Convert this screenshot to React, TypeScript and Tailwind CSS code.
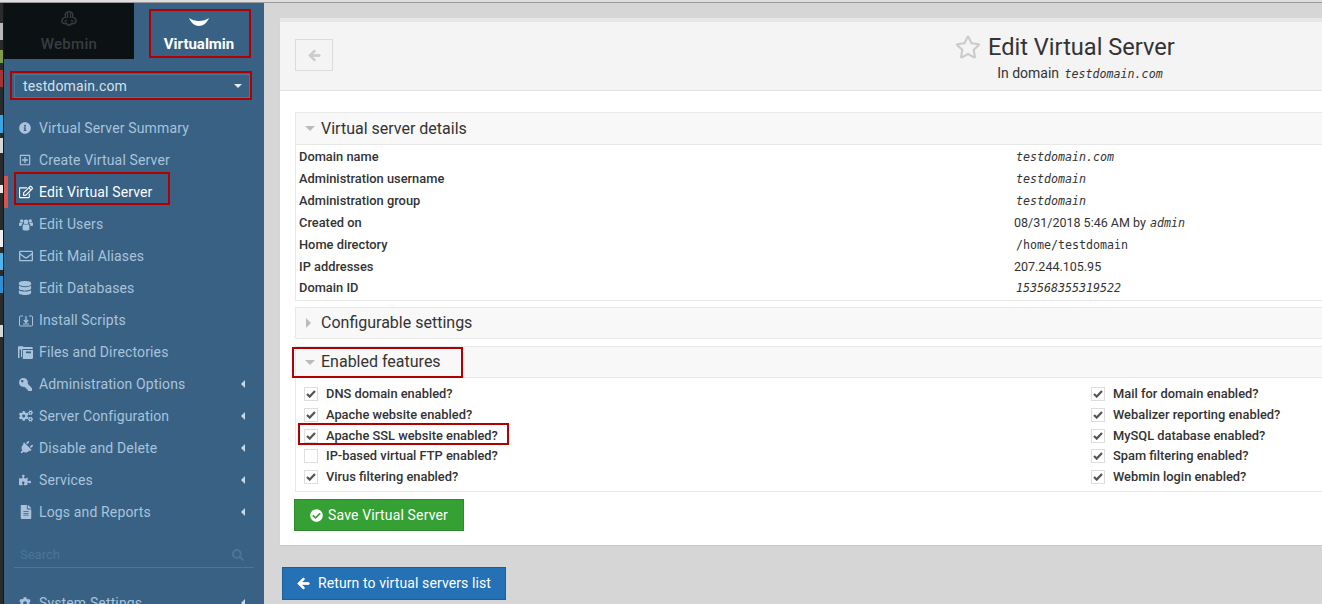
import React from "react";
import { FaInfoCircle, FaRegPlusSquare, FaRegEdit, FaRegEnvelope, FaDatabase, FaKey, FaCogs, FaPlug, FaPuzzlePiece, FaFileAlt, FaSearch, FaCog, FaArrowLeft, FaCheckCircle, FaRegStar } from "react-icons/fa";

const roboto = "font-['Roboto',sans-serif]";
const mono = "font-['DejaVu_Sans_Mono',monospace] text-[11.65px]";

function InstallIcon() {
  return (
    <svg width="14" height="13" viewBox="0 0 14 13" fill="none" stroke="currentColor">
      <path d="M4 2H1.500a1 1 0 0 0-1 1v8a1 1 0 0 0 1 1h11a1 1 0 0 0 1-1V3a1 1 0 0 0-1-1H10" strokeWidth="1" />
      <path d="M7 2v6M4.800 6L7 8.500 9.200 6M4 10h6" strokeWidth="1.200" />
    </svg>
  );
}

function UsersIcon() {
  return (
    <svg width="14" height="13" viewBox="0 0 14 13" fill="currentColor">
      <circle cx="7" cy="4" r="2.400" />
      <circle cx="2.700" cy="3" r="1.700" />
      <circle cx="11.300" cy="3" r="1.700" />
      <path d="M3.600 8c0-1.300 1-1.800 1.700-1.800.5.400 1 .6 1.700.6s1.200-.2 1.700-.6c.7 0 1.700.5 1.700 1.800v3.100c0 1-.7 1.400-1.400 1.400H5c-.7 0-1.400-.4-1.400-1.400z" />
      <path d="M0 5.500c0-.6.600-.9 1-.9.500.4 1 .5 1.700.5.400 0 .7 0 1-.2-.2.500 0 1-.2 1.200-.7.300-1.100 1-1.200 2H1c-.6 0-1-.4-1-1zM14 5.500c0-.6-.6-.9-1-.9-.5.400-1 .5-1.700.5-.4 0-.7 0-1-.2.200.500 0 1 .2 1.200.7.300 1.100 1 1.200 2H13c.6 0 1-.4 1-1z" />
    </svg>
  );
}

function FilesIcon() {
  return (
    <svg width="15" height="13" viewBox="0 0 15 13" fill="currentColor">
      <path d="M0 1.500C0 .8.500.3 1.200.3h3.300c.5 0 .9.300 1.100.7h8c.7 0 1.200.5 1.200 1.200V3H5.500C4.700 3 4 3.600 4 4.400V11H3V3.500H1.500V12H0z" />
      <path d="M4.800 4h10.200v7.800c0 .7-.5 1.200-1.200 1.200H4.800zM8 5.500v1.800h5V5.500z" />
    </svg>
  );
}

function WebminLogo() {
  return (
    <svg width="18" height="17" viewBox="0 0 18 18" fill="none" stroke="#383d40" strokeWidth="1.600">
      <path d="M6 2c2-1.500 4-1.500 6 0 1 1 1 3 .5 4.500 2 .5 4 2 4 4 0 2.500-2.500 3.500-4.500 2.500-1 1.500-2 2-3 2s-2-.5-3-2c-2 1-4.500 0-4.500-2.500 0-2 2-3.500 4-4C5 5 5 3 6 2z" />
      <path d="M7.500 2.500v5M10.500 2.500v5M7 9.500l-3 2M11 9.500l3 2" strokeWidth="1.200" />
    </svg>
  );
}

const items: [string, React.ReactNode, boolean?, boolean?][] = [
  ["Virtual Server Summary", <FaInfoCircle size={12} />],
  ["Create Virtual Server", <FaRegPlusSquare size={12} />],
  ["Edit Virtual Server", <FaRegEdit size={14} />, false, true],
  ["Edit Users", <UsersIcon />],
  ["Edit Mail Aliases", <FaRegEnvelope size={14} />],
  ["Edit Databases", <FaDatabase size={14} className="-ml-[1px]" />],
  ["Install Scripts", <InstallIcon />],
  ["Files and Directories", <span className="-ml-[1px]"><FilesIcon /></span>],
  ["Administration Options", <FaKey size={13} className="-scale-x-100" />, true],
  ["Server Configuration", <FaCogs size={14} />, true],
  ["Disable and Delete", <FaPlug size={14} className="rotate-45" />, true],
  ["Services", <FaPuzzlePiece size={12} />, true],
  ["Logs and Reports", <FaFileAlt size={14} />, true],
];

function SideItem({ label, icon, arrow, active }: { label: string; icon: React.ReactNode; arrow?: boolean; active?: boolean }) {
  return (
    <div className={`flex h-8 items-center pl-[15px] pr-[19px] text-[14px] tracking-[0.14px] ${active ? "text-white" : "text-[#a9c3dc]"}`}>
      <span className="flex w-5 shrink-0 justify-start">{icon}</span>
      <span className="flex-1 leading-none">{label}</span>
      {arrow && <span className="h-0 w-0 border-y-[4px] border-r-[4px] border-y-transparent border-r-[#c8d8e8]" />}
    </div>
  );
}

function Sidebar() {
  return (
    <aside className={`relative flex h-[604px] w-[260px] shrink-0 flex-col overflow-hidden bg-[#386183] pt-[3px] ${roboto}`}>
      <div className="flex h-[56px] shrink-0">
        <div className="flex w-[130px] flex-col items-center bg-[#0c1113] pt-[8px] text-[#383d40]">
          <WebminLogo />
          <span className="mt-[9px] text-[15px] font-medium leading-none tracking-[0.3px]">Webmin</span>
        </div>
        <div className="relative flex w-[130px] flex-col items-center pt-[14px] text-white">
          <svg width="20" height="10" viewBox="0 0 20 10" fill="#fff"><path d="M0 1c3 2 6 3 10 3s7-1 10-3c-2 5-6 8-10 8S2 6 0 1z" /></svg>
          <span className="mt-[10px] text-[15px] font-bold leading-none">Virtualmin</span>
          <div className="absolute left-[15px] top-[6px] h-[49px] w-[102px] border-2 border-[#b00000]" />
        </div>
      </div>
      <div className="relative mx-[10px] mt-[15px] flex h-[24px] w-[236px] shrink-0 items-center justify-between border border-[#4a7698] pl-[8px] pr-[7px] text-[14px] tracking-[0.14px] text-[#d5e1ec]">
        <span>testdomain.com</span>
        <span className="h-0 w-0 border-x-[4px] border-t-[4px] border-x-transparent border-t-[#e4ebf2]" />
        <div className="absolute -bottom-[3px] -left-[5px] -right-[3px] -top-[4px] border-2 border-[#b00000]" />
      </div>
      <nav className="mt-[14px] flex flex-col">
        {items.map(([label, icon, arrow, active]) => (
          <div key={label} className="relative">
            <SideItem label={label} icon={icon} arrow={arrow} active={active} />
            {active && (
              <>
                <div className="absolute bottom-0 left-0 top-0 w-[4px] bg-[#d9534f]" />
                <div className="absolute -top-[4px] left-[10px] h-[33px] w-[156px] border-2 border-[#b00000]" />
              </>
            )}
          </div>
        ))}
      </nav>
      <div className="mx-[10px] mt-[15px] flex h-[25px] w-[240px] shrink-0 items-center justify-between border-b border-[#4a7698] pl-[6px] pr-[10px] text-[13px] text-[#4c7596]">
        <span>Search</span>
        <FaSearch size={12} />
      </div>
      <div className="mt-[19px]">
        <SideItem label="System Settings" icon={<FaCog size={12} />} arrow />
      </div>
    </aside>
  );
}

function Section({ title, open, boxed, height }: { title: string; open: boolean; boxed?: boolean; height: string }) {
  return (
    <div className={`relative flex items-center border border-r-0 border-[#e8e8e8] bg-[#f8f8f8] pl-[9px] text-[16px] text-[#333] ${height}`}>
      <span className="flex w-[16px] items-center">
        {open ? (
          <span className="h-0 w-0 border-x-[5px] border-t-[5px] border-x-transparent border-t-[#bbb]" />
        ) : (
          <span className="ml-[1px] h-0 w-0 border-y-[5px] border-l-[5px] border-y-transparent border-l-[#bbb]" />
        )}
      </span>
      <span>{title}</span>
      {boxed && <div className="absolute -left-[4px] top-0 h-[31px] w-[171px] border-2 border-[#b00000]" />}
    </div>
  );
}

const details: [string, React.ReactNode, string][] = [
  ["Domain name", <i className={`ml-[2px] ${mono}`}>testdomain.com</i>, "h-[22px]"],
  ["Administration username", <i className={`ml-[2px] ${mono}`}>testdomain</i>, "h-[22px]"],
  ["Administration group", <i className={`ml-[2px] ${mono}`}>testdomain</i>, "h-[22px]"],
  ["Created on", <span>08/31/2018 5:46 AM by <i className={`ml-[1px] ${mono}`}>admin</i></span>, "h-[22px]"],
  ["Home directory", <span className={`ml-[2px] ${mono}`}>/home/testdomain</span>, "h-[22px]"],
  ["IP addresses", <span>207.244.105.95</span>, "h-[22px]"],
  ["Domain ID", <i className={`ml-[2px] ${mono}`}>153568355319522</i>, "h-[20px]"],
];

function Feature({ label, checked = true, boxed, tight }: { label: string; checked?: boolean; boxed?: boolean; tight?: boolean }) {
  return (
    <div className={`relative flex h-[21px] items-center text-[12.85px] font-medium text-[#333] ${tight ? "-mb-[1px]" : ""}`}>
      <span className="mr-[8px] flex h-[14px] w-[14px] items-center justify-center border border-[#ddd] bg-white">
        {checked && (
          <svg width="10" height="8" viewBox="0 0 10 8" fill="none" stroke="#555" strokeWidth="2.200">
            <path d="M1 4l2.700 2.600L9 1" />
          </svg>
        )}
      </span>
      <span>{label}</span>
      {boxed && <div className="absolute -left-[6px] -top-[2px] h-[22px] w-[211px] border-2 border-[#b00000]" />}
    </div>
  );
}

const strip: [string, string][] = [
  ["h-[23px]", "bg-[#2b2b2b]"],
  ["h-[17px]", "bg-[#b8b8b8]"],
  ["h-[10px]", "bg-[#2b2b2b]"],
  ["h-[13px]", "bg-[#7f9c44]"],
  ["h-[7px]", "bg-[#2b2b2b]"],
  ["h-[17px]", "bg-[#a83232]"],
  ["h-[28px]", "bg-[#2b2b2b]"],
  ["h-[18px]", "bg-[#3aa6e0]"],
  ["h-[5px]", "bg-[#2b2b2b]"],
  ["h-[15px]", "bg-[#d8d8d8]"],
  ["h-[32px]", "bg-[#2b2b2b]"],
  ["h-[8px]", "bg-[#e8e8e8]"],
  ["h-[37px]", "bg-[#2b2b2b]"],
  ["h-[17px]", "bg-[#f0f0f0]"],
  ["h-[6px]", "bg-[#2b2b2b]"],
  ["h-[17px]", "bg-[#4ab8ea]"],
  ["h-[6px]", "bg-[#2b2b2b]"],
  ["h-[17px]", "bg-[#2f8fd0]"],
  ["h-[32px]", "bg-[#2b2b2b]"],
  ["h-[12px]", "bg-[#d8d8d8]"],
];

export default function App() {
  return (
    <div className={`relative flex h-[604px] w-[1322px] overflow-hidden bg-[#d6d6d6] ${roboto}`}>
      <div className="flex w-[4px] shrink-0 flex-col border-r border-[#151515] bg-[#2b2b2b]">
        {strip.map(([h, c], i) => (
          <div key={i} className={`${h} ${c} shrink-0`} />
        ))}
      </div>
      <Sidebar />
      <main className="relative min-w-0 flex-1 pl-[16px] pt-[18px]">
        <div className="border-t-[4px] border-[#e6e6e6] bg-white pb-[14px] shadow-[0_1px_1px_rgba(0,0,0,0.05)]">
          <div className="flex h-[69px] border-b border-[#e2e2e2] bg-[#f4f4f4]">
            <div className="ml-[15px] mt-[17px] flex h-[32px] w-[38px] items-center justify-center border border-[#dcdcdc] text-[#ccc]">
              <FaArrowLeft size={13} className="stroke-current stroke-[30]" />
            </div>
            <div className="ml-[622px] flex flex-col items-center pt-[9px]">
              <div className="flex items-center text-[23.6px] leading-[32px] text-[#333]">
                <FaRegStar size={26} className="mr-[7px] text-[#ccc]" />
                <span>Edit Virtual Server</span>
              </div>
              <div className="ml-[30px] text-[14px] leading-[20px] text-[#333]">
                In domain <i className={`ml-[2px] ${mono}`}>testdomain.com</i>
              </div>
            </div>
          </div>
          <div className="pl-[15px] pt-[21px]">
            <Section title="Virtual server details" open height="h-[33px]" />
            <div className="border-b border-l border-[#e8e8e8] pb-[2px] pl-[3px] pt-[1px]">
              {details.map(([k, v, h]) => (
                <div key={k} className={`flex items-center text-[12.5px] text-[#333] ${h}`}>
                  <span className="w-[715px] shrink-0 text-[12.85px] font-medium">{k}</span>
                  <span className="font-normal">{v}</span>
                </div>
              ))}
            </div>
            <div className="mt-[6px]"><Section title="Configurable settings" open={false} height="h-[32px]" /></div>
            <div className="mt-[7px]"><Section title="Enabled features" open boxed height="h-[32px]" /></div>
            <div className="flex border-b border-l border-[#e8e8e8] pb-[4px] pl-[8px] pt-[5px]">
              <div className="w-[787px] shrink-0">
                <Feature label="DNS domain enabled?" />
                <Feature label="Apache website enabled?" />
                <Feature label="Apache SSL website enabled?" boxed tight />
                <Feature label="IP-based virtual FTP enabled?" checked={false} />
                <Feature label="Virus filtering enabled?" />
              </div>
              <div>
                <Feature label="Mail for domain enabled?" />
                <Feature label="Webalizer reporting enabled?" />
                <Feature label="MySQL database enabled?" tight />
                <Feature label="Spam filtering enabled?" />
                <Feature label="Webmin login enabled?" />
              </div>
            </div>
            <button className="-ml-[1px] mt-[7px] flex h-[32px] w-[170px] items-center justify-center gap-[5px] border border-[#2f8a2f] bg-[#35a033] text-[14px] tracking-[0.15px] text-white">
              <FaCheckCircle size={13} />
              Save Virtual Server
            </button>
          </div>
        </div>
        <button className="ml-[2px] mt-[22px] flex h-[33px] w-[224px] items-center justify-center gap-[8px] border border-[#1f5d96] bg-[#2471b5] text-[14px] tracking-[0.1px] text-white">
          <FaArrowLeft size={13} className="stroke-current stroke-[30]" />
          Return to virtual servers list
        </button>
      </main>
      <div className="absolute inset-x-0 top-0 h-[3px] border-b border-[#999] bg-[#dedede]" />
    </div>
  );
}
